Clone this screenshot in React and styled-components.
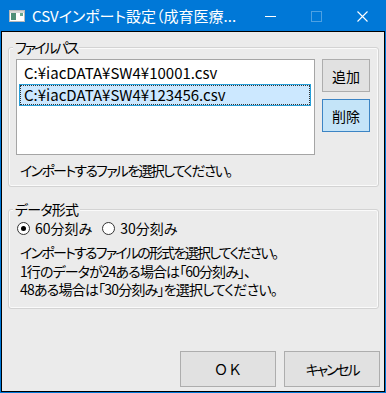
import React from 'react';
import styled, { createGlobalStyle } from 'styled-components';

const Global = createGlobalStyle`
  html, body { margin: 0; padding: 0; background: #ffffff; }
  body { font-family: "Noto Sans CJK JP", "Noto Sans", sans-serif; }
  * { box-sizing: border-box; }
`;

const FONT = `"Noto Sans CJK JP", "Noto Sans", sans-serif`;
const BG = '#ebebeb';

const Window = styled.div`
  width: 386px;
  height: 393px;
  border: 1px solid #0078d7;
  background: #0078d7;
  display: flex;
  flex-direction: column;
`;

const TitleBar = styled.div`
  height: 30px;
  flex: none;
  display: flex;
  align-items: center;
  color: #ffffff;
  background: #0078d7;
`;

const AppIcon = styled.svg`
  flex: none;
  margin-left: 8px;
  display: block;
`;

const Title = styled.div`
  margin-left: 7px;
  font-family: ${FONT};
  font-size: 15px;
  line-height: 30px;
  white-space: nowrap;
  font-feature-settings: "palt";
`;

const Controls = styled.div`
  margin-left: auto;
  display: flex;
  height: 30px;
`;

const CtrlButton = styled.div`
  width: 46px;
  height: 30px;
  display: flex;
  align-items: center;
  justify-content: center;
  opacity: ${(p) => (p.$disabled ? 0.3 : 1)};
`;

const Client = styled.div`
  flex: 1;
  border: 1px solid #000000;
  background: ${BG};
  display: flex;
  flex-direction: column;
  padding: 7px 4px 4px 6px;
  font-family: ${FONT};
  font-size: 14px;
  line-height: 18px;
  color: #000000;
  font-feature-settings: "palt";
`;

const Group = styled.fieldset`
  margin: ${(p) => p.$mt}px 1px 0 0;
  padding: 4px 7px ${(p) => p.$pb}px 7px;
  border: 1px solid #d3d3d3;
  border-radius: 3px;
  box-shadow: inset 0 0 0 1px #fafafa;
  min-width: 0;
`;

const Legend = styled.legend`
  margin-left: -3px;
  padding: 0 2px;
  font-size: 14px;
  line-height: 16px;
  letter-spacing: ${(p) => p.$track}px;
  background: ${BG};
`;

const ListRow = styled.div`
  display: flex;
  align-items: flex-start;
  gap: 7px;
`;

const FileList = styled.div`
  width: 299px;
  height: 96px;
  background: #ffffff;
  border: 1px solid #a5a5a5;
  padding: 2px 3px 0 2px;
`;

const FileItem = styled.div`
  position: relative;
  height: 22px;
  line-height: 20px;
  padding-left: 4px;
  font-size: 15px;
  white-space: nowrap;
  border: 1px solid ${(p) => (p.$selected ? '#26a0da' : 'transparent')};
  background: ${(p) => (p.$selected ? '#cce8ff' : 'transparent')};

  &::after {
    content: '';
    display: ${(p) => (p.$selected ? 'block' : 'none')};
    position: absolute;
    inset: 0;
    border: 1px dotted #333333;
  }
`;

const SideButtons = styled.div`
  display: flex;
  flex-direction: column;
  gap: 7px;
`;

const Button = styled.button`
  width: ${(p) => p.$w}px;
  height: ${(p) => p.$h}px;
  padding: 0;
  border: 1px solid ${(p) => (p.$focus ? '#3c84c4' : '#adadad')};
  background: ${(p) => (p.$focus ? '#c4e4f8' : '#e1e1e1')};
  font-family: ${FONT};
  font-size: 14px;
  color: #000000;
  letter-spacing: ${(p) => p.$track || 0}px;
  font-feature-settings: ${(p) => (p.$fullWidth ? 'normal' : '"palt"')};
`;

const Hint = styled.div`
  margin-top: 6px;
  padding-left: 4px;
  line-height: 18px;
  letter-spacing: -1.7px;
`;

const RadioRow = styled.div`
  display: flex;
  align-items: center;
  height: 18px;
  margin-top: -2px;
  padding-left: 1px;
`;

const RadioLabel = styled.label`
  display: flex;
  align-items: center;
  gap: 5px;
  margin-right: 10px;
`;

const RadioCircle = styled.span`
  position: relative;
  width: 13px;
  height: 13px;
  border-radius: 50%;
  border: 1px solid #333333;
  background: #ffffff;

  &::after {
    content: '';
    display: ${(p) => (p.$checked ? 'block' : 'none')};
    position: absolute;
    left: 3px;
    top: 3px;
    width: 5px;
    height: 5px;
    border-radius: 50%;
    background: #000000;
  }
`;

const Desc = styled.div`
  margin-top: 6px;
  padding-left: 4px;
`;

const DescLine = styled.div`
  line-height: 18.5px;
  white-space: nowrap;
  letter-spacing: ${(p) => p.$track}px;
`;

const ButtonRow = styled.div`
  margin-top: auto;
  display: flex;
  justify-content: flex-end;
  gap: 8px;
`;

const descLines = [
  { text: 'インポートするファイルの形式を選択してください。', track: -1.75 },
  { text: '1行のデータが24ある場合は「60分刻み」、', track: -0.9 },
  { text: '48ある場合は「30分刻み」を選択してください。', track: -0.8 },
];

export default function App() {
  return (
    <>
      <Global />
      <Window>
        <TitleBar>
          <AppIcon width="16" height="12" viewBox="0 0 16 12">
            <rect x="0.5" y="0.5" width="15" height="11" fill="#ffffff" stroke="#b8b8b8" />
            <rect x="1" y="1" width="14" height="2" fill="#d8d8d8" />
            <rect x="2" y="3" width="5" height="7" fill="#4f8f78" />
            <rect x="11" y="3" width="3" height="3" fill="#6aa88e" />
          </AppIcon>
          <Title>CSVインポート設定（成育医療...</Title>
          <Controls>
            <CtrlButton>
              <svg width="11" height="11" viewBox="0 0 11 11">
                <line x1="0" y1="5.5" x2="11" y2="5.5" stroke="#fff" strokeWidth="1" />
              </svg>
            </CtrlButton>
            <CtrlButton $disabled>
              <svg width="11" height="11" viewBox="0 0 11 11">
                <rect x="0.5" y="0.5" width="10" height="10" fill="none" stroke="#fff" strokeWidth="1" />
              </svg>
            </CtrlButton>
            <CtrlButton>
              <svg width="11" height="11" viewBox="0 0 11 11">
                <path d="M0.5 0.5 L10.5 10.5 M10.5 0.5 L0.5 10.5" stroke="#fff" strokeWidth="1.1" />
              </svg>
            </CtrlButton>
          </Controls>
        </TitleBar>
        <Client>
          <Group $mt={0} $pb={7}>
            <Legend $track={-2}>ファイルパス</Legend>
            <ListRow>
              <FileList>
                <FileItem>C:¥iacDATA¥SW4¥10001.csv</FileItem>
                <FileItem $selected>C:¥iacDATA¥SW4¥123456.csv</FileItem>
              </FileList>
              <SideButtons>
                <Button $w={48} $h={33}>追加</Button>
                <Button $w={48} $h={33} $focus>削除</Button>
              </SideButtons>
            </ListRow>
            <Hint>インポートするファルを選択してください。</Hint>
          </Group>
          <Group $mt={14} $pb={9}>
            <Legend $track={-0.8}>データ形式</Legend>
            <RadioRow>
              <RadioLabel>
                <RadioCircle $checked />
                60分刻み
              </RadioLabel>
              <RadioLabel>
                <RadioCircle />
                30分刻み
              </RadioLabel>
            </RadioRow>
            <Desc>
              {descLines.map((l) => (
                <DescLine key={l.text} $track={l.track}>{l.text}</DescLine>
              ))}
            </Desc>
          </Group>
          <ButtonRow>
            <Button $w={96} $h={36} $fullWidth>ＯＫ</Button>
            <Button $w={96} $h={36} $track={-2.2}>キャンセル</Button>
          </ButtonRow>
        </Client>
      </Window>
    </>
  );
}
